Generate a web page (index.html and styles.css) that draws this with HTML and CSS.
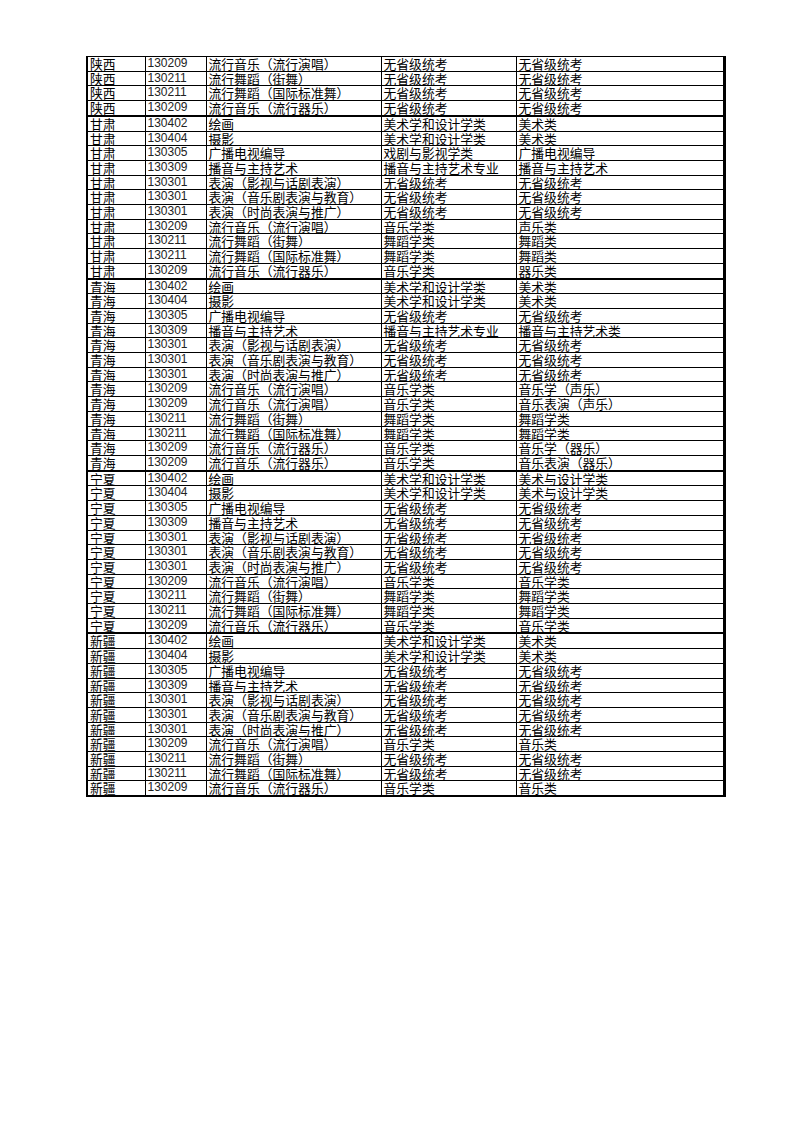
FILE: index.html
```html
<!DOCTYPE html>
<html lang="zh">
<head>
<meta charset="utf-8">
<link rel="stylesheet" href="styles.css">
</head>
<body>
<div class="page">
<table class="sheet">
<colgroup><col class="c1"><col class="c2"><col class="c3"><col class="c4"><col class="c5"></colgroup>
<tbody>
<tr class="first"><td>陕西</td><td class="n">130209</td><td>流行音乐（流行演唱）</td><td>无省级统考</td><td>无省级统考</td></tr>
<tr><td>陕西</td><td class="n">130211</td><td>流行舞蹈（街舞）</td><td>无省级统考</td><td>无省级统考</td></tr>
<tr><td>陕西</td><td class="n">130211</td><td>流行舞蹈（国际标准舞）</td><td>无省级统考</td><td>无省级统考</td></tr>
<tr><td>陕西</td><td class="n">130209</td><td>流行音乐（流行器乐）</td><td>无省级统考</td><td>无省级统考</td></tr>
<tr class="g"><td>甘肃</td><td class="n">130402</td><td>绘画</td><td>美术学和设计学类</td><td>美术类</td></tr>
<tr><td>甘肃</td><td class="n">130404</td><td>摄影</td><td>美术学和设计学类</td><td>美术类</td></tr>
<tr><td>甘肃</td><td class="n">130305</td><td>广播电视编导</td><td>戏剧与影视学类</td><td>广播电视编导</td></tr>
<tr><td>甘肃</td><td class="n">130309</td><td>播音与主持艺术</td><td>播音与主持艺术专业</td><td>播音与主持艺术</td></tr>
<tr><td>甘肃</td><td class="n">130301</td><td>表演（影视与话剧表演）</td><td>无省级统考</td><td>无省级统考</td></tr>
<tr><td>甘肃</td><td class="n">130301</td><td>表演（音乐剧表演与教育）</td><td>无省级统考</td><td>无省级统考</td></tr>
<tr><td>甘肃</td><td class="n">130301</td><td>表演（时尚表演与推广）</td><td>无省级统考</td><td>无省级统考</td></tr>
<tr><td>甘肃</td><td class="n">130209</td><td>流行音乐（流行演唱）</td><td>音乐学类</td><td>声乐类</td></tr>
<tr><td>甘肃</td><td class="n">130211</td><td>流行舞蹈（街舞）</td><td>舞蹈学类</td><td>舞蹈类</td></tr>
<tr><td>甘肃</td><td class="n">130211</td><td>流行舞蹈（国际标准舞）</td><td>舞蹈学类</td><td>舞蹈类</td></tr>
<tr><td>甘肃</td><td class="n">130209</td><td>流行音乐（流行器乐）</td><td>音乐学类</td><td>器乐类</td></tr>
<tr class="g"><td>青海</td><td class="n">130402</td><td>绘画</td><td>美术学和设计学类</td><td>美术类</td></tr>
<tr><td>青海</td><td class="n">130404</td><td>摄影</td><td>美术学和设计学类</td><td>美术类</td></tr>
<tr><td>青海</td><td class="n">130305</td><td>广播电视编导</td><td>无省级统考</td><td>无省级统考</td></tr>
<tr><td>青海</td><td class="n">130309</td><td>播音与主持艺术</td><td>播音与主持艺术专业</td><td>播音与主持艺术类</td></tr>
<tr><td>青海</td><td class="n">130301</td><td>表演（影视与话剧表演）</td><td>无省级统考</td><td>无省级统考</td></tr>
<tr><td>青海</td><td class="n">130301</td><td>表演（音乐剧表演与教育）</td><td>无省级统考</td><td>无省级统考</td></tr>
<tr><td>青海</td><td class="n">130301</td><td>表演（时尚表演与推广）</td><td>无省级统考</td><td>无省级统考</td></tr>
<tr><td>青海</td><td class="n">130209</td><td>流行音乐（流行演唱）</td><td>音乐学类</td><td>音乐学（声乐）</td></tr>
<tr><td>青海</td><td class="n">130209</td><td>流行音乐（流行演唱）</td><td>音乐学类</td><td>音乐表演（声乐）</td></tr>
<tr><td>青海</td><td class="n">130211</td><td>流行舞蹈（街舞）</td><td>舞蹈学类</td><td>舞蹈学类</td></tr>
<tr><td>青海</td><td class="n">130211</td><td>流行舞蹈（国际标准舞）</td><td>舞蹈学类</td><td>舞蹈学类</td></tr>
<tr><td>青海</td><td class="n">130209</td><td>流行音乐（流行器乐）</td><td>音乐学类</td><td>音乐学（器乐）</td></tr>
<tr><td>青海</td><td class="n">130209</td><td>流行音乐（流行器乐）</td><td>音乐学类</td><td>音乐表演（器乐）</td></tr>
<tr class="g"><td>宁夏</td><td class="n">130402</td><td>绘画</td><td>美术学和设计学类</td><td>美术与设计学类</td></tr>
<tr><td>宁夏</td><td class="n">130404</td><td>摄影</td><td>美术学和设计学类</td><td>美术与设计学类</td></tr>
<tr><td>宁夏</td><td class="n">130305</td><td>广播电视编导</td><td>无省级统考</td><td>无省级统考</td></tr>
<tr><td>宁夏</td><td class="n">130309</td><td>播音与主持艺术</td><td>无省级统考</td><td>无省级统考</td></tr>
<tr><td>宁夏</td><td class="n">130301</td><td>表演（影视与话剧表演）</td><td>无省级统考</td><td>无省级统考</td></tr>
<tr><td>宁夏</td><td class="n">130301</td><td>表演（音乐剧表演与教育）</td><td>无省级统考</td><td>无省级统考</td></tr>
<tr><td>宁夏</td><td class="n">130301</td><td>表演（时尚表演与推广）</td><td>无省级统考</td><td>无省级统考</td></tr>
<tr><td>宁夏</td><td class="n">130209</td><td>流行音乐（流行演唱）</td><td>音乐学类</td><td>音乐学类</td></tr>
<tr><td>宁夏</td><td class="n">130211</td><td>流行舞蹈（街舞）</td><td>舞蹈学类</td><td>舞蹈学类</td></tr>
<tr><td>宁夏</td><td class="n">130211</td><td>流行舞蹈（国际标准舞）</td><td>舞蹈学类</td><td>舞蹈学类</td></tr>
<tr><td>宁夏</td><td class="n">130209</td><td>流行音乐（流行器乐）</td><td>音乐学类</td><td>音乐学类</td></tr>
<tr class="g"><td>新疆</td><td class="n">130402</td><td>绘画</td><td>美术学和设计学类</td><td>美术类</td></tr>
<tr><td>新疆</td><td class="n">130404</td><td>摄影</td><td>美术学和设计学类</td><td>美术类</td></tr>
<tr><td>新疆</td><td class="n">130305</td><td>广播电视编导</td><td>无省级统考</td><td>无省级统考</td></tr>
<tr><td>新疆</td><td class="n">130309</td><td>播音与主持艺术</td><td>无省级统考</td><td>无省级统考</td></tr>
<tr><td>新疆</td><td class="n">130301</td><td>表演（影视与话剧表演）</td><td>无省级统考</td><td>无省级统考</td></tr>
<tr><td>新疆</td><td class="n">130301</td><td>表演（音乐剧表演与教育）</td><td>无省级统考</td><td>无省级统考</td></tr>
<tr><td>新疆</td><td class="n">130301</td><td>表演（时尚表演与推广）</td><td>无省级统考</td><td>无省级统考</td></tr>
<tr><td>新疆</td><td class="n">130209</td><td>流行音乐（流行演唱）</td><td>音乐学类</td><td>音乐类</td></tr>
<tr><td>新疆</td><td class="n">130211</td><td>流行舞蹈（街舞）</td><td>无省级统考</td><td>无省级统考</td></tr>
<tr><td>新疆</td><td class="n">130211</td><td>流行舞蹈（国际标准舞）</td><td>无省级统考</td><td>无省级统考</td></tr>
<tr><td>新疆</td><td class="n">130209</td><td>流行音乐（流行器乐）</td><td>音乐学类</td><td>音乐类</td></tr>
</tbody>
</table>
</div>
</body>
</html>
```

FILE: styles.css
```css
html, body {
  margin: 0;
  padding: 0;
  background: #ffffff;
}

.page {
  padding: 56px 0 0 86px;
}

.sheet {
  border-collapse: collapse;
  table-layout: fixed;
  width: 637px;
  border-left: 2px solid #000;
  border-right: 3px solid #000;
  border-bottom: 2px solid #000;
  border-top: 1px solid #000;
  font-family: "Noto Sans CJK SC", "Liberation Sans", sans-serif;
  font-size: 12.8px;
  color: #000;
}

.c1 { width: 58px; }
.c2 { width: 61px; }
.c3 { width: 175px; }
.c4 { width: 135px; }
.c5 { width: 208px; }

.sheet td {
  height: 13.7px;
  padding: 0 0 0 2px;
  border: 1px solid #000;
  line-height: 13.7px;
  vertical-align: bottom;
  white-space: nowrap;
}

.sheet td.n {
  font-family: "Liberation Sans", sans-serif;
  font-size: 12px;
  color: #222;
}

.sheet tr.g td {
  border-top: 2px solid #000;
}
```
